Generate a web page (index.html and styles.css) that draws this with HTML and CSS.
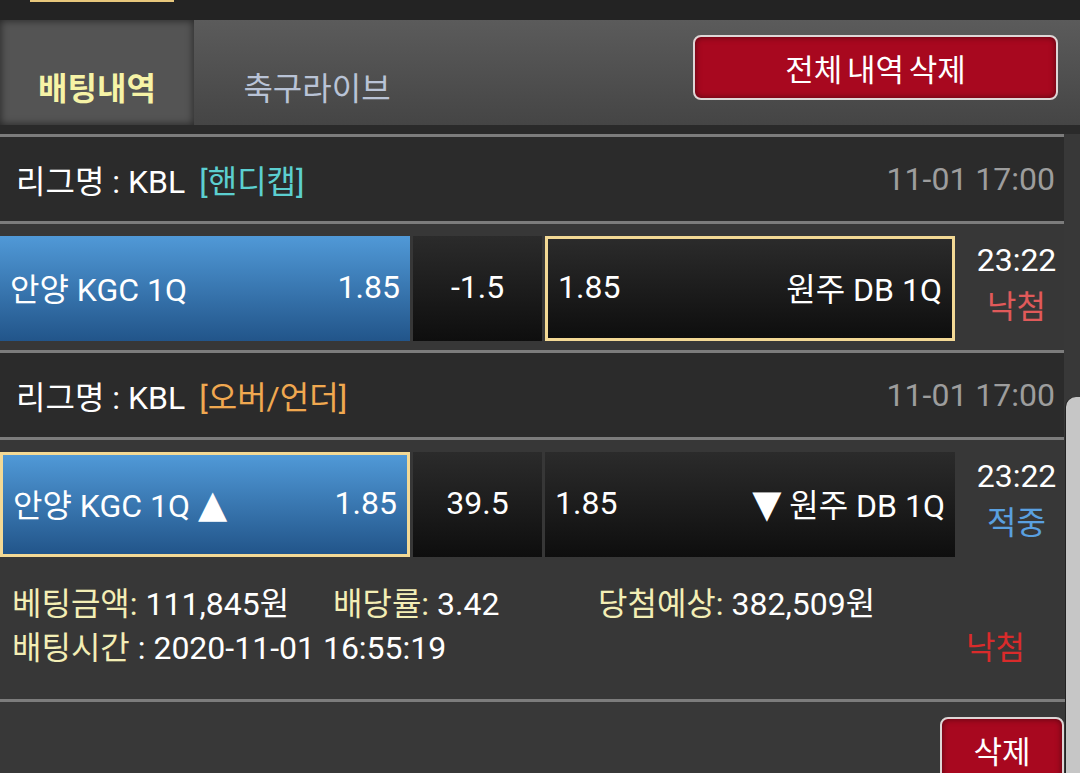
FILE: index.html
```html
<!DOCTYPE html>
<html lang="ko">
  <head>
    <meta charset="utf-8" />
    <title>배팅내역</title>
    <link rel="stylesheet" href="styles.css">
  </head>
  <body>

    <div class="topbar"><span class="topbar-mark"></span></div>

    <!-- Tabs -->
    <div class="tabs">
      <div class="tab tab-active">배팅내역</div>
      <div class="tab">축구라이브</div>
      <button class="btn-red btn-clear">전체 내역 삭제</button>
    </div>

    <div class="content">
      <div class="list">

        <!-- Bet 1 -->
        <div class="bet">
          <div class="league">
            <span>리그명 : KBL</span>
            <span class="league-tag tag-handi">[핸디캡]</span>
            <span class="league-date">11-01 17:00</span>
          </div>
          <div class="match">
            <div class="pick pick-blue">
              <span>안양 KGC 1Q</span>
              <span>1.85</span>
            </div>
            <div class="handicap">-1.5</div>
            <div class="pick pick-dark pick-selected">
              <span>1.85</span>
              <span>원주 DB 1Q</span>
            </div>
            <div class="time">
              <span>23:22</span>
              <span class="res-lose">낙첨</span>
            </div>
          </div>
        </div>

        <!-- Bet 2 -->
        <div class="bet">
          <div class="league">
            <span>리그명 : KBL</span>
            <span class="league-tag tag-ou">[오버/언더]</span>
            <span class="league-date">11-01 17:00</span>
          </div>
          <div class="match">
            <div class="pick pick-blue pick-selected">
              <span>안양 KGC 1Q <span class="arrow">▲</span></span>
              <span>1.85</span>
            </div>
            <div class="handicap">39.5</div>
            <div class="pick pick-dark">
              <span>1.85</span>
              <span><span class="arrow">▼</span> 원주 DB 1Q</span>
            </div>
            <div class="time">
              <span>23:22</span>
              <span class="res-win">적중</span>
            </div>
          </div>
          <div class="details">
            <div class="details-row">
              <span class="detail detail-amount"><span class="label">베팅금액:</span> 111,845원</span>
              <span class="detail detail-rate"><span class="label">배당률:</span> 3.42</span>
              <span class="detail"><span class="label">당첨예상:</span> 382,509원</span>
            </div>
            <div class="details-row">
              <span class="detail"><span class="label">배팅시간</span> : 2020-11-01 16:55:19</span>
              <span class="detail-result">낙첨</span>
            </div>
          </div>
        </div>

      </div>

      <div class="footer">
        <button class="btn-red btn-delete">삭제</button>
      </div>

      <div class="scroll-thumb"></div>
    </div>

  </body>
</html>
```

FILE: styles.css
```css
body {
  margin: 0;
  width: 1080px;
  height: 773px;
  overflow: hidden;
  background-color: #383838;
  color: white;
  font-family: Roboto, "Noto Sans CJK KR", sans-serif;
}

.topbar {
  height: 20px;
  background-color: #232323;
}
.topbar-mark {
  display: block;
  margin-left: 30px;
  width: 144px;
  height: 2px;
  background-color: #e7c77c;
}

/* tabs */
.tabs {
  display: flex;
  height: 105px;
  background: linear-gradient(#5b5b5b, #454545);
}
.tab {
  display: flex;
  align-items: flex-end;
  justify-content: center;
  box-sizing: border-box;
  width: 246px;
  padding-bottom: 18px;
  font-size: 32px;
  line-height: 36px;
  color: #b9c3d6;
}
.tab-active {
  width: 194px;
  background-color: #545454;
  box-shadow: inset 0 0 8px rgba(0, 0, 0, 0.6);
  color: #f6f3a6;
  font-weight: bold;
}

.btn-red {
  background-color: #a8081f;
  border: 2px solid #ded6d6;
  border-radius: 8px;
  box-shadow: inset 0 0 6px rgba(0, 0, 0, 0.5);
  color: white;
  font-family: Roboto, "Noto Sans CJK KR", sans-serif;
  font-size: 31px;
  padding: 0;
  cursor: pointer;
}
.btn-clear {
  align-self: flex-start;
  margin: 15px 22px 0 auto;
  width: 365px;
  height: 65px;
  word-spacing: -3px;
}

/* list */
.content {
  position: relative;
  border-top: 9px solid #2a2a2a;
}
.list {
  margin-right: 16px;
}
.bet {
  border-top: 3px solid #7c7c7c;
}
.league {
  display: flex;
  align-items: center;
  height: 84px;
  padding: 0 9px 0 16px;
  background-color: #2b2b2b;
  border-bottom: 3px solid #7c7c7c;
  font-size: 32px;
}
.league-tag {
  margin-left: 14px;
}
.tag-handi {
  color: #5ccfd0;
}
.tag-ou {
  color: #f0a850;
}
.league-date {
  margin-left: auto;
  color: #9d9d9d;
}

.match {
  display: flex;
  gap: 3px;
  padding: 12px 0 9px;
  background-color: #373737;
  font-size: 32px;
}
.pick {
  display: flex;
  align-items: center;
  justify-content: space-between;
  box-sizing: border-box;
  width: 410px;
  height: 105px;
  padding: 0 10px 4px;
}
.pick-blue {
  background: linear-gradient(#5099d7, #22558a);
}
.pick-dark {
  background: linear-gradient(#2b2b2b, #0e0e0e);
}
.pick-selected {
  border: 3px solid #f3d995;
}
.arrow {
  font-family: "DejaVu Sans", sans-serif;
  font-size: 38px;
  line-height: 1;
}
.handicap {
  display: flex;
  align-items: center;
  justify-content: center;
  width: 129px;
  height: 105px;
  padding-bottom: 4px;
  box-sizing: border-box;
  background: linear-gradient(#2b2b2b, #0e0e0e);
}
.time {
  flex: 1;
  display: flex;
  flex-direction: column;
  align-items: center;
  justify-content: center;
  padding: 0 0 10px 11px;
  line-height: 47px;
}
.res-lose {
  color: #e05a5a;
}
.res-win {
  color: #5aa0e0;
}

.details {
  padding: 16px 39px 29px 12px;
  background-color: #373737;
  font-size: 32px;
  line-height: 44px;
}
.details-row {
  display: flex;
}
.detail-amount {
  width: 321px;
}
.detail-rate {
  width: 265px;
}
.label {
  color: #f3eeb5;
}
.detail-result {
  margin-left: auto;
  color: #d92b2b;
}

.footer {
  display: flex;
  justify-content: flex-end;
  padding: 15px 16px 0 0;
  border-top: 3px solid #7c7c7c;
}
.btn-delete {
  width: 124px;
  height: 65px;
}

.scroll-thumb {
  position: absolute;
  top: 263px;
  right: 0;
  bottom: 0;
  width: 14px;
  background-color: #c6c6c6;
  border-top-left-radius: 10px;
  box-shadow: -1px 0 0 #222;
}
```
